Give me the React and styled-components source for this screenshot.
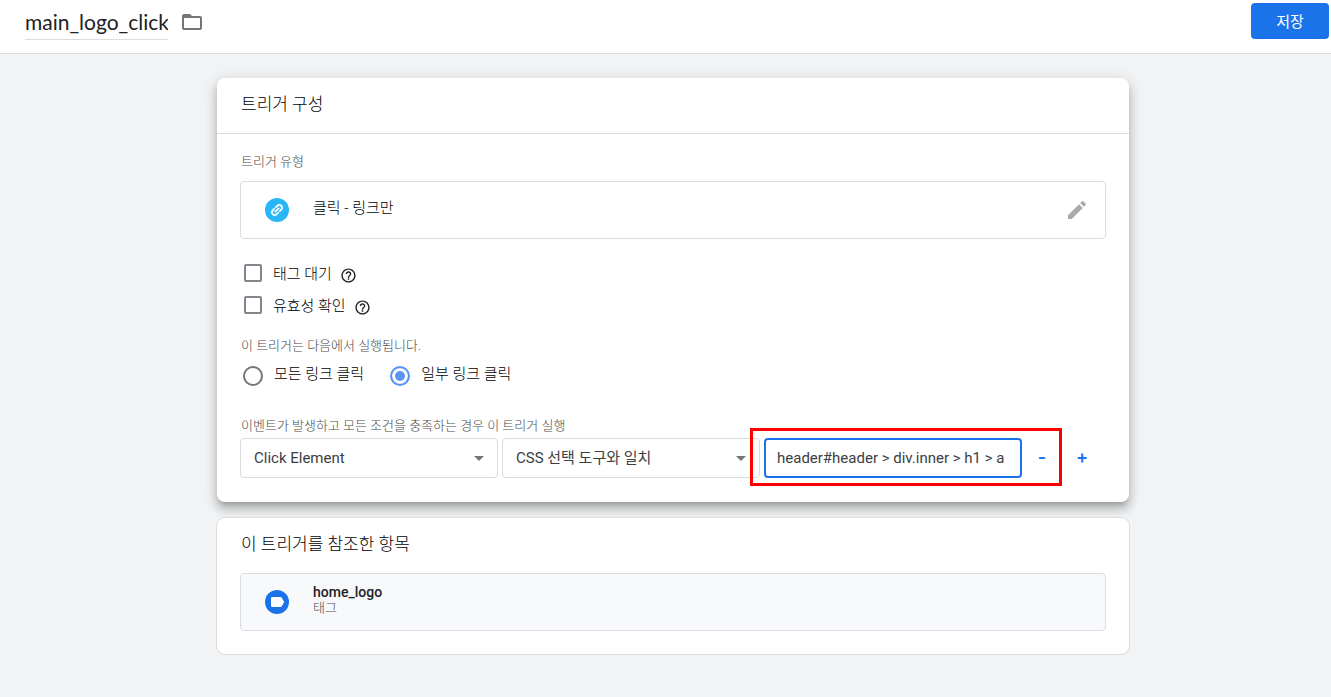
import { useState } from "react";
import { MdArrowDropDown, MdEdit, MdFolderOpen, MdHelpOutline, MdLink } from "react-icons/md";
import styled, { createGlobalStyle } from 'styled-components';

const App = () => {
    const [name, setName] = useState("main_logo_click");
    const [waitTags, setWaitTags] = useState(false);
    const [validate, setValidate] = useState(false);
    const [fireOn, setFireOn] = useState("some");
    const [selector, setSelector] = useState("header#header > div.inner > h1 > a");

    return (
        <>
            <GlobalStyle />
            <Header>
                <TitleInput
                    aria-label="트리거 이름"
                    value={name}
                    onChange={(e) => setName(e.target.value)}
                />
                <FolderButton aria-label="폴더">
                    <MdFolderOpen size={24} />
                </FolderButton>
                <SaveButton>저장</SaveButton>
            </Header>
            <Main>
                <Card $raised>
                    <CardHeader>
                        <CardTitle>트리거 구성</CardTitle>
                    </CardHeader>
                    <CardBody>
                        <Caption>트리거 유형</Caption>
                        <TypeBox>
                            <LinkBadge>
                                <MdLink size={16} />
                            </LinkBadge>
                            <ItemText>
                                <ItemLabel>클릭 - 링크만</ItemLabel>
                            </ItemText>
                            <EditButton aria-label="수정">
                                <MdEdit size={24} />
                            </EditButton>
                        </TypeBox>

                        <CheckList>
                            <CheckRow>
                                <Option>
                                    <Checkbox
                                        type="checkbox"
                                        checked={waitTags}
                                        onChange={() => setWaitTags(!waitTags)}
                                    />
                                    <CheckLabel>태그 대기</CheckLabel>
                                </Option>
                                <HelpIcon size={17} />
                            </CheckRow>
                            <CheckRow>
                                <Option>
                                    <Checkbox
                                        type="checkbox"
                                        checked={validate}
                                        onChange={() => setValidate(!validate)}
                                    />
                                    <CheckLabel>유효성 확인</CheckLabel>
                                </Option>
                                <HelpIcon size={17} />
                            </CheckRow>
                        </CheckList>

                        <Caption>이 트리거는 다음에서 실행됩니다.</Caption>
                        <RadioRow>
                            <Option>
                                <Radio
                                    type="radio"
                                    name="fireOn"
                                    checked={fireOn === "all"}
                                    onChange={() => setFireOn("all")}
                                />
                                <RadioLabel>모든 링크 클릭</RadioLabel>
                            </Option>
                            <Option>
                                <Radio
                                    type="radio"
                                    name="fireOn"
                                    checked={fireOn === "some"}
                                    onChange={() => setFireOn("some")}
                                />
                                <RadioLabel>일부 링크 클릭</RadioLabel>
                            </Option>
                        </RadioRow>

                        <Caption>이벤트가 발생하고 모든 조건을 충족하는 경우 이 트리거 실행</Caption>
                        <Conditions>
                            <SelectWrap>
                                <Select aria-label="변수">
                                    <option>Click Element</option>
                                </Select>
                                <MdArrowDropDown size={24} />
                            </SelectWrap>
                            <SelectWrap>
                                <Select aria-label="연산자">
                                    <option>CSS 선택 도구와 일치</option>
                                </Select>
                                <MdArrowDropDown size={24} />
                            </SelectWrap>
                            <Highlighted>
                                <ValueInput
                                    aria-label="값"
                                    value={selector}
                                    onChange={(e) => setSelector(e.target.value)}
                                />
                                <RowButton $width={40} aria-label="조건 삭제">-</RowButton>
                            </Highlighted>
                            <RowButton $width={32} aria-label="조건 추가">+</RowButton>
                        </Conditions>
                    </CardBody>
                </Card>

                <Card>
                    <References>
                        <CardTitle>이 트리거를 참조한 항목</CardTitle>
                        <ReferenceBox href="#home_logo">
                            <TagIcon />
                            <ItemText>
                                <ReferenceName>home_logo</ReferenceName>
                                <ReferenceKind>태그</ReferenceKind>
                            </ItemText>
                        </ReferenceBox>
                    </References>
                </Card>
            </Main>
        </>
    );
}

const TagIcon = () => (
    <svg width="24" height="24" viewBox="0 0 24 24" aria-hidden="true">
        <circle cx="12" cy="12" r="12" fill="#1a73e8" />
        <path d="M7.2 7h8.3c.5 0 .9.2 1.1.6L19.2 12l-2.6 4.4c-.2.4-.6.6-1.1.6H7.2c-.7 0-1.2-.5-1.2-1.2V8.2c0-.7.5-1.2 1.2-1.2z" fill="#fff" />
    </svg>
);

const GlobalStyle = createGlobalStyle`
    * {
        box-sizing: border-box;
    }
    body {
        margin: 0;
        background-color: #f1f3f4;
        color: #202124;
        font-family: Roboto, "Noto Sans CJK KR", sans-serif;
        font-size: 15px;
    }
    button, input, select {
        font-family: inherit;
    }
    button {
        padding: 0;
        border: none;
        background: none;
        cursor: pointer;
    }
`

const Header = styled.header`
    display: flex;
    align-items: flex-start;
    height: 54px;
    padding: 3px 2px 0 25px;
    background-color: #ffffff;
    border-bottom: 1px solid #dadce0;
`

const TitleInput = styled.input`
    width: 143px;
    height: 37px;
    padding: 0;
    border: none;
    border-bottom: 1px solid #dadce0;
    outline: none;
    color: #202124;
    font-family: Lato, sans-serif;
    font-size: 21px;
`

const FolderButton = styled.button`
    display: flex;
    margin: 7px auto 0 12px;
    color: #757575;
`

const SaveButton = styled.button`
    width: 78px;
    height: 36px;
    padding-bottom: 2px;
    border-radius: 4px;
    background-color: #1a73e8;
    color: #ffffff;
    font-size: 15px;
`

const Main = styled.main`
    display: flex;
    flex-direction: column;
    align-items: center;
    gap: 16px;
    padding: 24px 0 24px 15px;
`

const Card = styled.section`
    width: 100%;
    max-width: 912px;
    border-radius: 8px;
    background-color: #ffffff;
    box-shadow: ${props => props.$raised
        ? "0 5px 5px -3px rgba(0,0,0,.2), 0 8px 10px 1px rgba(0,0,0,.14), 0 3px 14px 2px rgba(0,0,0,.12)"
        : "0 0 0 1px #dadce0"};
`

const CardHeader = styled.div`
    padding: 14px 24px 17px;
    border-bottom: 1px solid #dadce0;
`

const CardTitle = styled.h2`
    margin: 0;
    color: #000000;
    font-size: 17px;
    font-weight: 300;
    line-height: 24px;
`

const CardBody = styled.div`
    padding: 17px 23px 24px;
`

const Caption = styled.div`
    color: #4a4a4a;
    font-size: 13px;
    font-weight: 300;
    line-height: 20px;
    padding: 1px 0 0 1px;
    margin-bottom: -1px;
`

const Box = styled.div`
    display: flex;
    align-items: center;
    gap: 24px;
    height: 58px;
    padding: 0 16px 0 24px;
    border: 1px solid #dadce0;
    border-radius: 4px;
`

const TypeBox = styled(Box)`
    margin-top: 10px;
`

const LinkBadge = styled.span`
    display: flex;
    align-items: center;
    justify-content: center;
    width: 24px;
    height: 24px;
    border-radius: 50%;
    background-color: #29b6f6;
    color: #ffffff;

    svg {
        transform: rotate(-45deg);
    }
    path:last-child {
        stroke-width: 1px;
    }
    path:first-child {
        stroke: none;
    }
`

const ReferenceBox = styled(Box).attrs({ as: "a" })`
    margin-top: 17px;
    background-color: #f8f9fa;
    color: inherit;
    text-decoration: none;
`

const ItemText = styled.div`
    display: flex;
    flex-direction: column;
    flex: 1;
    padding-bottom: 4px;
    line-height: 16px;
`

const ItemLabel = styled.span`
    color: #000000;
    font-size: 15px;
    font-weight: 300;
`

const ReferenceName = styled.span`
    font-size: 14px;
    font-weight: 500;
`

const ReferenceKind = styled.span`
    color: #4a4a4a;
    font-size: 13px;
    font-weight: 300;
`

const EditButton = styled.button`
    display: flex;
    color: #aaaaaa;
`

const CheckList = styled.div`
    margin: 18px 0 14px;
`

const CheckRow = styled.div`
    display: flex;
    align-items: center;
    gap: 8px;
    height: 32px;
    padding-left: 4px;
`

const HelpIcon = styled(MdHelpOutline)`
    margin-top: 4px;
`

const Option = styled.label`
    display: flex;
    align-items: center;
    gap: 11px;
    color: #000000;
    line-height: 20px;
`

const CheckLabel = styled.span`
    font-weight: 300;
    padding-top: 2px;
`

const RadioLabel = styled.span`
    font-weight: 300;
    padding-bottom: 4px;
`

const Checkbox = styled.input`
    appearance: none;
    width: 18px;
    height: 18px;
    margin: 0;
    border: 2px solid #80868b;
    border-radius: 2px;

    &:checked {
        border-color: #1a73e8;
        background-color: #1a73e8;
    }
`

const RadioRow = styled.div`
    display: flex;
    align-items: center;
    gap: 26px;
    height: 32px;
    margin: 5px 0 23px;
    padding-left: 3px;
`

const Radio = styled.input`
    appearance: none;
    width: 20px;
    height: 20px;
    margin: 0;
    border: 2px solid #757575;
    border-radius: 50%;

    &:checked {
        border-color: #5b94f5;
        background-color: #5b94f5;
        box-shadow: inset 0 0 0 3px #ffffff;
    }
`

const Conditions = styled.div`
    display: flex;
    gap: 4px;
    margin-top: 3px;
`

const SelectWrap = styled.div`
    position: relative;
    flex: 0 1 258px;
    color: #757575;

    svg {
        position: absolute;
        top: 8px;
        right: 7px;
        pointer-events: none;
    }
`

const Select = styled.select`
    appearance: none;
    width: 100%;
    height: 40px;
    padding: 0 32px 0 13px;
    border: 1px solid #dadce0;
    border-radius: 4px;
    background-color: #ffffff;
    color: #3c4043;
    font-size: 15px;
`

const Highlighted = styled.div`
    position: relative;
    display: flex;
    flex: 0 1 298px;

    &::after {
        content: "";
        position: absolute;
        inset: -10px 0 -8px -14px;
        border: 3px solid #ff0000;
        pointer-events: none;
    }
`

const ValueInput = styled.input`
    flex: 1;
    min-width: 0;
    height: 40px;
    padding: 0 11px;
    border: 2px solid #1a73e8;
    border-radius: 4px;
    outline: none;
    color: #3c4043;
    font-size: 15px;
`

const RowButton = styled.button`
    width: ${props => props.$width}px;
    height: 36px;
    color: #1a73e8;
    font-family: Inter, sans-serif;
    font-size: 18px;
    font-weight: 600;
`

const References = styled.div`
    padding: 14px 23px 23px;

    h2 {
        padding-left: 1px;
    }
`

export default App;
